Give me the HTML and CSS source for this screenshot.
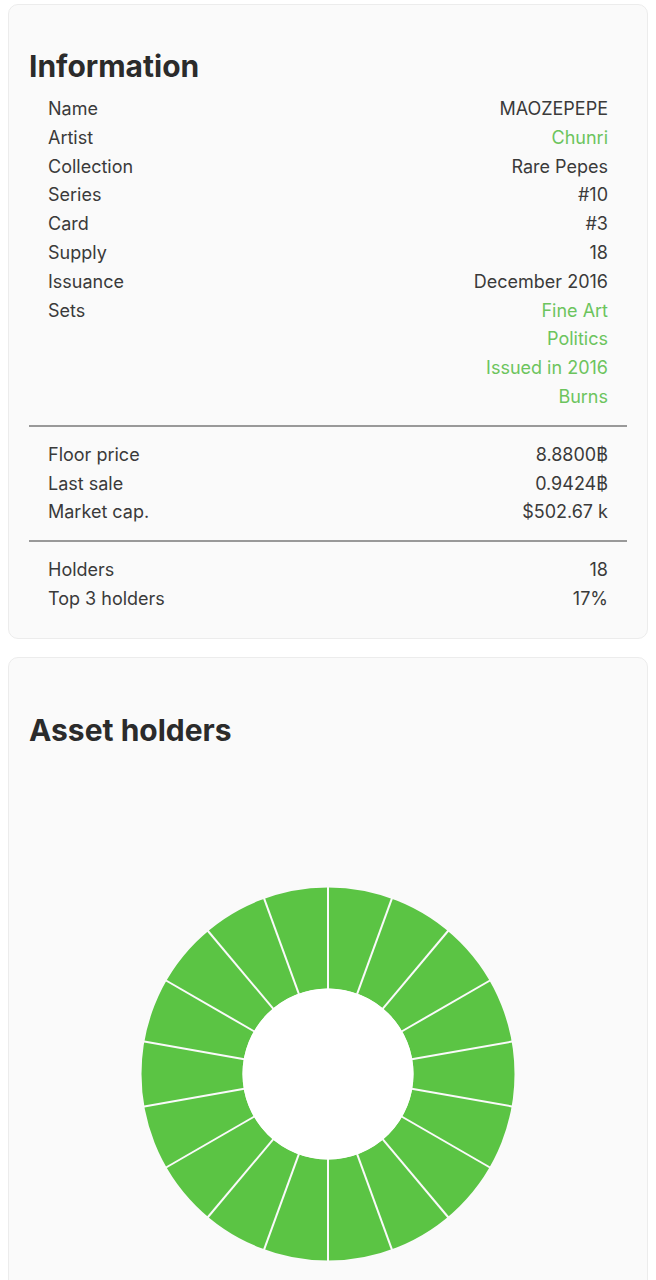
FILE: index.html
```html
<!DOCTYPE html>
<html lang="en">
<head>
    <meta charset="UTF-8">
    <meta name="viewport" content="width=device-width, initial-scale=1.0">
    <title>MAOZEPEPE</title>
    <link rel="stylesheet" href="styles.css">
</head>
<body>
    <section class="card card-info">
        <h2 class="card-title">Information</h2>
        <dl class="stats">
            <div class="stat"><dt>Name</dt><dd>MAOZEPEPE</dd></div>
            <div class="stat"><dt>Artist</dt><dd><a href="#">Chunri</a></dd></div>
            <div class="stat"><dt>Collection</dt><dd>Rare Pepes</dd></div>
            <div class="stat"><dt>Series</dt><dd>#10</dd></div>
            <div class="stat"><dt>Card</dt><dd>#3</dd></div>
            <div class="stat"><dt>Supply</dt><dd>18</dd></div>
            <div class="stat"><dt>Issuance</dt><dd>December 2016</dd></div>
            <div class="stat">
                <dt>Sets</dt>
                <dd class="set-list">
                    <a href="#">Fine Art</a>
                    <a href="#">Politics</a>
                    <a href="#">Issued in 2016</a>
                    <a href="#">Burns</a>
                </dd>
            </div>
        </dl>
        <hr class="divider">
        <dl class="stats">
            <div class="stat"><dt>Floor price</dt><dd>8.8800&#x0E3F;</dd></div>
            <div class="stat"><dt>Last sale</dt><dd>0.9424&#x0E3F;</dd></div>
            <div class="stat"><dt>Market cap.</dt><dd>$502.67 k</dd></div>
        </dl>
        <hr class="divider">
        <dl class="stats">
            <div class="stat"><dt>Holders</dt><dd>18</dd></div>
            <div class="stat"><dt>Top 3 holders</dt><dd>17%</dd></div>
        </dl>
    </section>

    <section class="card card-holders">
        <h2 class="card-title">Asset holders</h2>
        <div class="chart">
            <!-- 18 holders, one equal slice each -->
            <svg class="donut" width="380" height="380" viewBox="-190 -190 380 380">
                <circle r="136" fill="none" stroke="#5bc444" stroke-width="101"></circle>
                <g stroke="#fafafa" stroke-width="2">
                    <line x1="0" y1="-85" x2="0" y2="-188" transform="rotate(0)"></line>
                    <line x1="0" y1="-85" x2="0" y2="-188" transform="rotate(20)"></line>
                    <line x1="0" y1="-85" x2="0" y2="-188" transform="rotate(40)"></line>
                    <line x1="0" y1="-85" x2="0" y2="-188" transform="rotate(60)"></line>
                    <line x1="0" y1="-85" x2="0" y2="-188" transform="rotate(80)"></line>
                    <line x1="0" y1="-85" x2="0" y2="-188" transform="rotate(100)"></line>
                    <line x1="0" y1="-85" x2="0" y2="-188" transform="rotate(120)"></line>
                    <line x1="0" y1="-85" x2="0" y2="-188" transform="rotate(140)"></line>
                    <line x1="0" y1="-85" x2="0" y2="-188" transform="rotate(160)"></line>
                    <line x1="0" y1="-85" x2="0" y2="-188" transform="rotate(180)"></line>
                    <line x1="0" y1="-85" x2="0" y2="-188" transform="rotate(200)"></line>
                    <line x1="0" y1="-85" x2="0" y2="-188" transform="rotate(220)"></line>
                    <line x1="0" y1="-85" x2="0" y2="-188" transform="rotate(240)"></line>
                    <line x1="0" y1="-85" x2="0" y2="-188" transform="rotate(260)"></line>
                    <line x1="0" y1="-85" x2="0" y2="-188" transform="rotate(280)"></line>
                    <line x1="0" y1="-85" x2="0" y2="-188" transform="rotate(300)"></line>
                    <line x1="0" y1="-85" x2="0" y2="-188" transform="rotate(320)"></line>
                    <line x1="0" y1="-85" x2="0" y2="-188" transform="rotate(340)"></line>
                </g>
                <circle r="85.5" fill="#ffffff"></circle>
            </svg>
        </div>
    </section>
</body>
</html>
```

FILE: styles.css
```css
body {
    font-family: Inter, "Noto Sans", sans-serif;
    background-color: #ffffff;
    color: #333;
    margin: 4px 8px;
}

.card {
    background-color: #fafafa;
    border: 1px solid #ececec;
    border-radius: 10px;
    padding: 0 20px 24px;
}

.card-info {
    padding-top: 43px;
}

.card-holders {
    margin-top: 18px;
    padding-top: 54px;
}

.card-title {
    font-size: 30px;
    line-height: 36px;
    font-weight: 700;
    color: #2b2b2b;
    margin: 0 0 11px;
}

.stats {
    margin: 0;
    padding: 0 19px 0 19px;
}

.stat {
    display: flex;
    justify-content: space-between;
    font-size: 18px;
    line-height: 28.8px;
    color: #3a3a3a;
}

.stat dt,
.stat dd {
    margin: 0;
}

.stat dd {
    text-align: right;
}

.stat a {
    color: #6cc45d; /* green link */
    text-decoration: none;
}

.set-list {
    display: flex;
    flex-direction: column;
    align-items: flex-end;
}

.divider {
    border: none;
    border-top: 2px solid #999;
    margin: 13px 0 14px;
}

.chart {
    display: flex;
    justify-content: center;
    margin-top: 136px;
    padding-bottom: 40px;
}

.donut {
    display: block;
}
```
